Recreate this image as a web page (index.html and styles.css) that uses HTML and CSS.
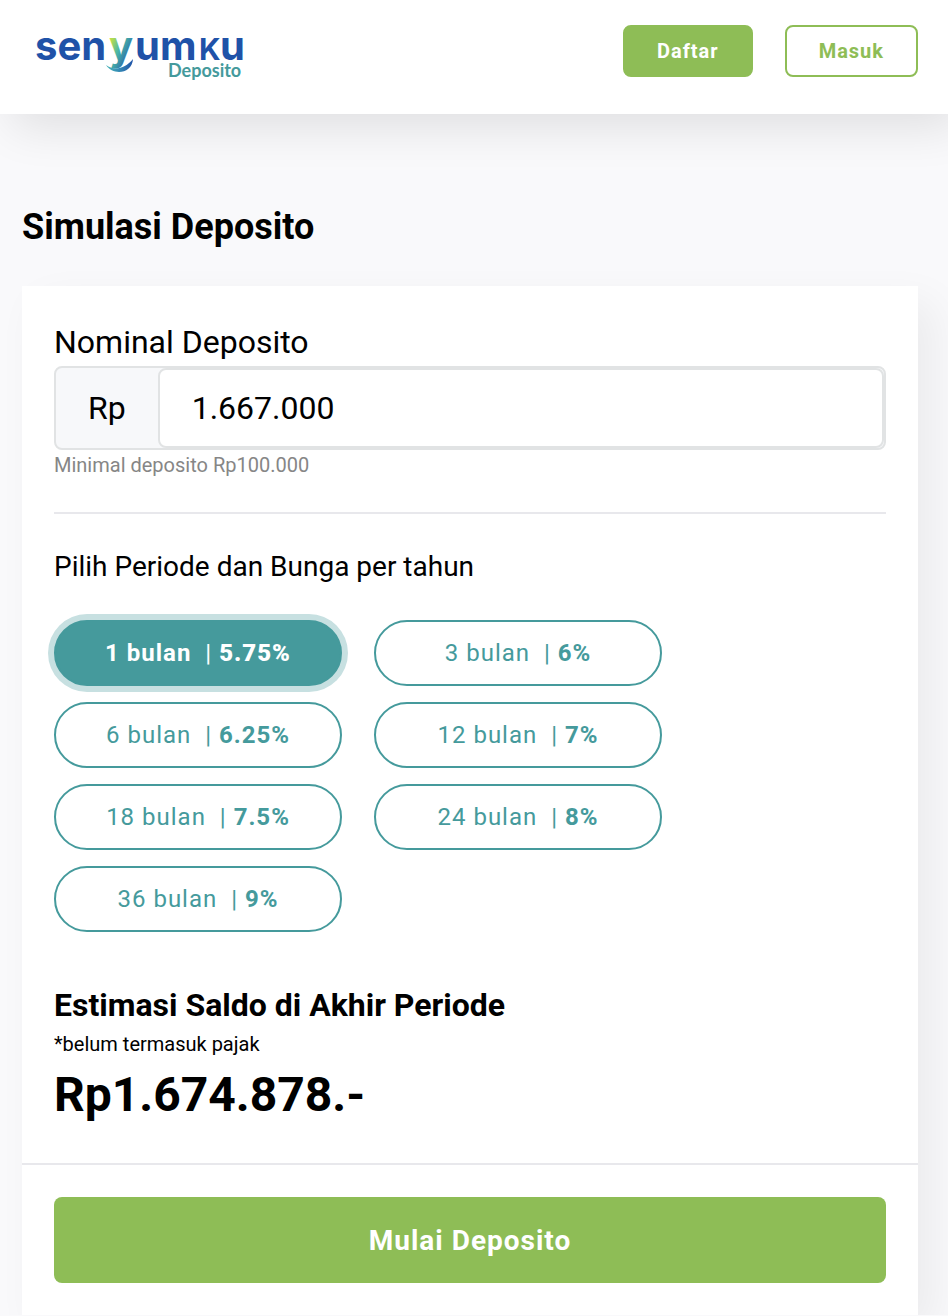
FILE: index.html
```
<!DOCTYPE html>
<html lang="id">
<head>
    <meta charset="UTF-8">
    <meta name="viewport" content="width=device-width, initial-scale=1.0">
    <title>Senyumku Deposito</title>
    <link rel="stylesheet" href="styles.css">
</head>
<body>
    <header class="navbar">
        <a class="logo" href="#" aria-label="Senyumku Deposito">
            <svg width="220" height="72" viewBox="0 0 220 72">
                <defs>
                    <linearGradient id="letterY" x1="0" y1="0" x2="1" y2="1">
                        <stop offset="0.25" stop-color="#b4dc50"/>
                        <stop offset="0.5" stop-color="#48b5a8"/>
                        <stop offset="0.85" stop-color="#2456a8"/>
                    </linearGradient>
                    <linearGradient id="smile" x1="0" y1="0" x2="1" y2="0">
                        <stop offset="0" stop-color="#48b5b8"/>
                        <stop offset="0.5" stop-color="#3489b4"/>
                        <stop offset="1" stop-color="#1f52a8"/>
                    </linearGradient>
                </defs>
                <text class="logo-text" x="1" y="45">sen</text>
                <text class="logo-text logo-y" x="75" y="45">y</text>
                <text class="logo-text" x="101" y="45">um</text>
                <text class="logo-text logo-k" x="165" y="45">K</text>
                <text class="logo-text" x="186" y="45">u</text>
                <path d="M72 50 C80 56 91 54 99 44 C98 59 79 61 72 50 Z" fill="url(#smile)"/>
                <text class="logo-sub" x="134" y="62">Deposito</text>
            </svg>
        </a>
        <nav class="nav-buttons">
            <a class="btn btn-fill" href="#daftar">Daftar</a>
            <a class="btn btn-outline" href="#masuk">Masuk</a>
        </nav>
    </header>

    <main class="container">
        <h1>Simulasi Deposito</h1>
        <form class="card">
            <div class="card-body">
                <label class="nominal-label" for="nominal">Nominal Deposito</label>
                <div class="input-group">
                    <span class="prefix">Rp</span>
                    <input type="text" id="nominal" inputmode="numeric" value="1.667.000">
                </div>
                <small class="hint">Minimal deposito Rp100.000</small>
                <hr>
                <h2>Pilih Periode dan Bunga per tahun</h2>
                <div class="periods">
                    <button type="button" class="period active">1 bulan &nbsp;<span>|</span> <b>5.75%</b></button>
                    <button type="button" class="period">3 bulan &nbsp;<span>|</span> <b>6%</b></button>
                    <button type="button" class="period">6 bulan &nbsp;<span>|</span> <b>6.25%</b></button>
                    <button type="button" class="period">12 bulan &nbsp;<span>|</span> <b>7%</b></button>
                    <button type="button" class="period">18 bulan &nbsp;<span>|</span> <b>7.5%</b></button>
                    <button type="button" class="period">24 bulan &nbsp;<span>|</span> <b>8%</b></button>
                    <button type="button" class="period">36 bulan &nbsp;<span>|</span> <b>9%</b></button>
                </div>
                <h3>Estimasi Saldo di Akhir Periode</h3>
                <p class="note">*belum termasuk pajak</p>
                <p class="total">Rp1.674.878.-</p>
            </div>
            <div class="card-footer">
                <button type="submit" class="submit">Mulai Deposito</button>
            </div>
        </form>
    </main>
</body>
</html>
```
FILE: styles.css
```
* {
    box-sizing: border-box;
}
body {
    margin: 0;
    font-family: Roboto, sans-serif;
    color: #000;
    background-color: #f9f9fb;
    overflow-x: hidden;
}
h1, h2, h3, p {
    margin: 0;
}

/* Header */
.navbar {
    display: flex;
    justify-content: space-between;
    align-items: flex-start;
    height: 114px;
    padding: 15px 30px 0 34px;
    background-color: #fff;
    box-shadow: 12px 12px 48px rgba(0, 0, 0, 0.11);
}
.logo svg {
    display: block;
}
.logo-text {
    font-family: Inter, sans-serif;
    font-size: 40px;
    font-weight: 700;
    fill: #1f52a8;
}
.logo-y {
    fill: url(#letterY);
}
.logo-k {
    font-size: 30px;
}
.logo-sub {
    font-family: Lato, sans-serif;
    font-size: 18px;
    font-weight: 700;
    fill: #459a9c;
}
.nav-buttons {
    display: flex;
    gap: 32px;
    padding-top: 10px;
}
.btn {
    padding: 0 32px;
    border: 2px solid #8ebd56;
    border-radius: 8px;
    font-size: 20px;
    font-weight: 700;
    line-height: 48px;
    letter-spacing: 1px;
    text-decoration: none;
}
.btn-fill {
    background-color: #8ebd56;
    color: #fff;
}
.btn-outline {
    background-color: #fff;
    color: #8ebd56;
}

/* Simulation */
.container {
    padding: 86px 30px 0 22px;
}
h1 {
    margin-bottom: 32px;
    font-size: 36px;
    line-height: 54px;
}
.card {
    background-color: #fff;
    box-shadow: 16px 16px 40px rgba(0, 0, 0, 0.06);
}
.card-body {
    padding: 32px;
}
.nominal-label {
    display: block;
    font-size: 32px;
    line-height: 48px;
}
.input-group {
    display: flex;
    height: 84px;
    border: 2px solid #e1e3e4;
    border-radius: 8px;
    background-color: #f7f8fa;
    font-size: 32px;
}
.prefix {
    padding: 0 32px;
    line-height: 80px;
}
.input-group input {
    flex: 1;
    min-width: 0;
    padding: 0 32px;
    border: 2px solid #e1e3e4;
    border-radius: 8px;
    background-color: #fff;
    color: #000;
    font-family: inherit;
    font-size: inherit;
}
.hint {
    display: block;
    font-size: 20px;
    line-height: 30px;
    color: #868686;
}
hr {
    margin: 32px 0;
    border: none;
    border-top: 2px solid #e8e8ec;
}
h2 {
    margin-bottom: 32px;
    font-size: 28px;
    font-weight: 400;
    line-height: 42px;
}
.periods {
    display: grid;
    grid-template-columns: repeat(auto-fill, 288px);
    gap: 16px 32px;
    max-width: 608px;
    margin-bottom: 49px;
}
.period {
    height: 66px;
    padding: 0;
    border: 2px solid #459a9c;
    border-radius: 33px;
    background-color: #fff;
    color: #459a9c;
    font-family: inherit;
    font-size: 24px;
    letter-spacing: 1px;
    cursor: pointer;
}
.period span {
    font-weight: 400;
}
.period.active {
    background-color: #459a9c;
    color: #fff;
    font-weight: 700;
    box-shadow: 0 0 0 6px #c7e0e1;
}
h3 {
    font-size: 32px;
    line-height: 48px;
}
.note {
    font-size: 20px;
    line-height: 30px;
}
.total {
    font-size: 48px;
    font-weight: 700;
    line-height: 72px;
}
.card-footer {
    padding: 32px;
    border-top: 2px solid #e8e8ec;
}
.submit {
    display: block;
    width: 100%;
    height: 86px;
    border: none;
    border-radius: 8px;
    background-color: #8ebd56;
    color: #fff;
    font-family: inherit;
    font-size: 28px;
    font-weight: 700;
    letter-spacing: 1px;
    cursor: pointer;
}
```
